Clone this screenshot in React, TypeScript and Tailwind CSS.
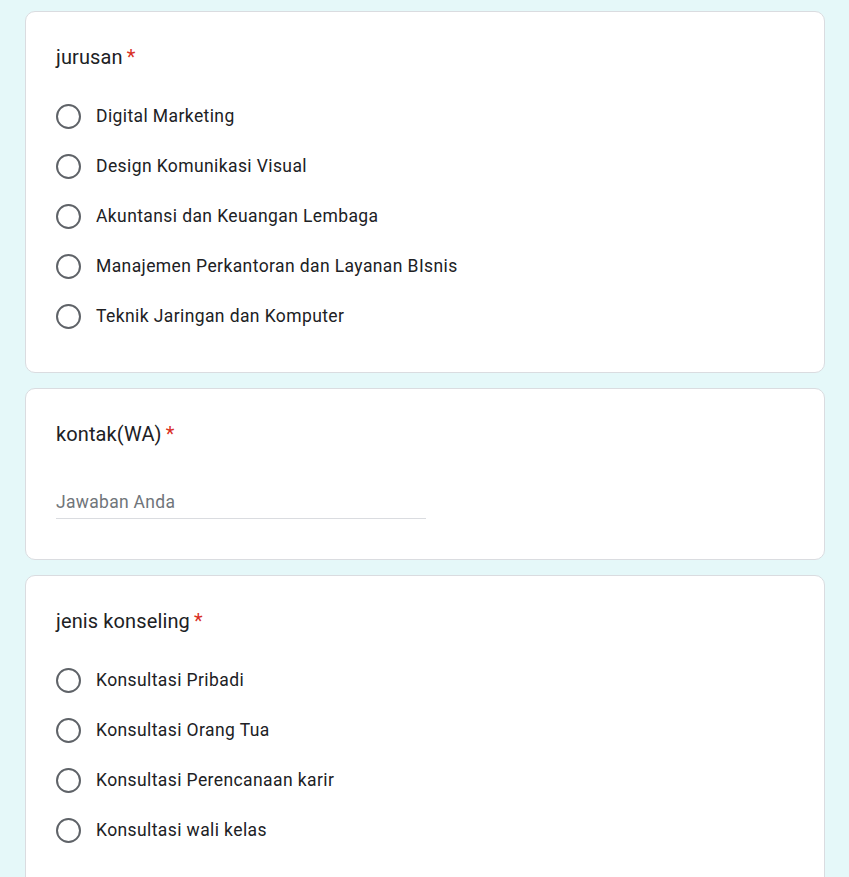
import React from "react";

const font = { fontFamily: "Roboto, 'Noto Sans', Arial, sans-serif" };

function Radio({ label }: { label: string }) {
  return (
    <div className="flex h-[50px] items-center">
      <div className="h-[25px] w-[25px] shrink-0 rounded-full border-[2.5px] border-[#5f6368]" />
      <span className="ml-[15px] text-[17.5px] leading-[25px] tracking-[0.4px] text-[#202124]">{label}</span>
    </div>
  );
}

function Title({ text }: { text: string }) {
  return (
    <div className="text-[20px] leading-[30px] tracking-[0.12px] text-[#202124]">
      {text}
      <span className="ml-[4px] text-[#d93025]">*</span>
    </div>
  );
}

function Card({ children }: { children: React.ReactNode }) {
  return (
    <div className="w-[800px] rounded-[10px] border border-[#dadce0] bg-white px-[30px] pb-[31px] pt-[30px]">
      {children}
    </div>
  );
}

export default function App() {
  return (
    <div className="min-h-[877px] bg-[#e5f8f9] pl-[25px] pt-[11px]" style={font}>
      <div className="flex flex-col gap-[15px]">
        <Card>
          <Title text="jurusan" />
          <div className="mt-[19px] flex flex-col">
            <Radio label="Digital Marketing" />
            <Radio label="Design Komunikasi Visual" />
            <Radio label="Akuntansi dan Keuangan Lembaga" />
            <Radio label="Manajemen Perkantoran dan Layanan BIsnis" />
            <Radio label="Teknik Jaringan dan Komputer" />
          </div>
        </Card>
        <Card>
          <Title text="kontak(WA)" />
          <div className="mt-[41px] w-[370px] border-b-[1.5px] border-[#dadce0] pb-[3px]">
            <span className="text-[17.5px] leading-[25px] tracking-[0.3px] text-[#70757a]">Jawaban Anda</span>
          </div>
          <div className="h-[9px]" />
        </Card>
        <Card>
          <Title text="jenis konseling" />
          <div className="mt-[19px] flex flex-col">
            <Radio label="Konsultasi Pribadi" />
            <Radio label="Konsultasi Orang Tua" />
            <Radio label="Konsultasi Perencanaan karir" />
            <Radio label="Konsultasi wali kelas" />
          </div>
        </Card>
      </div>
    </div>
  );
}
